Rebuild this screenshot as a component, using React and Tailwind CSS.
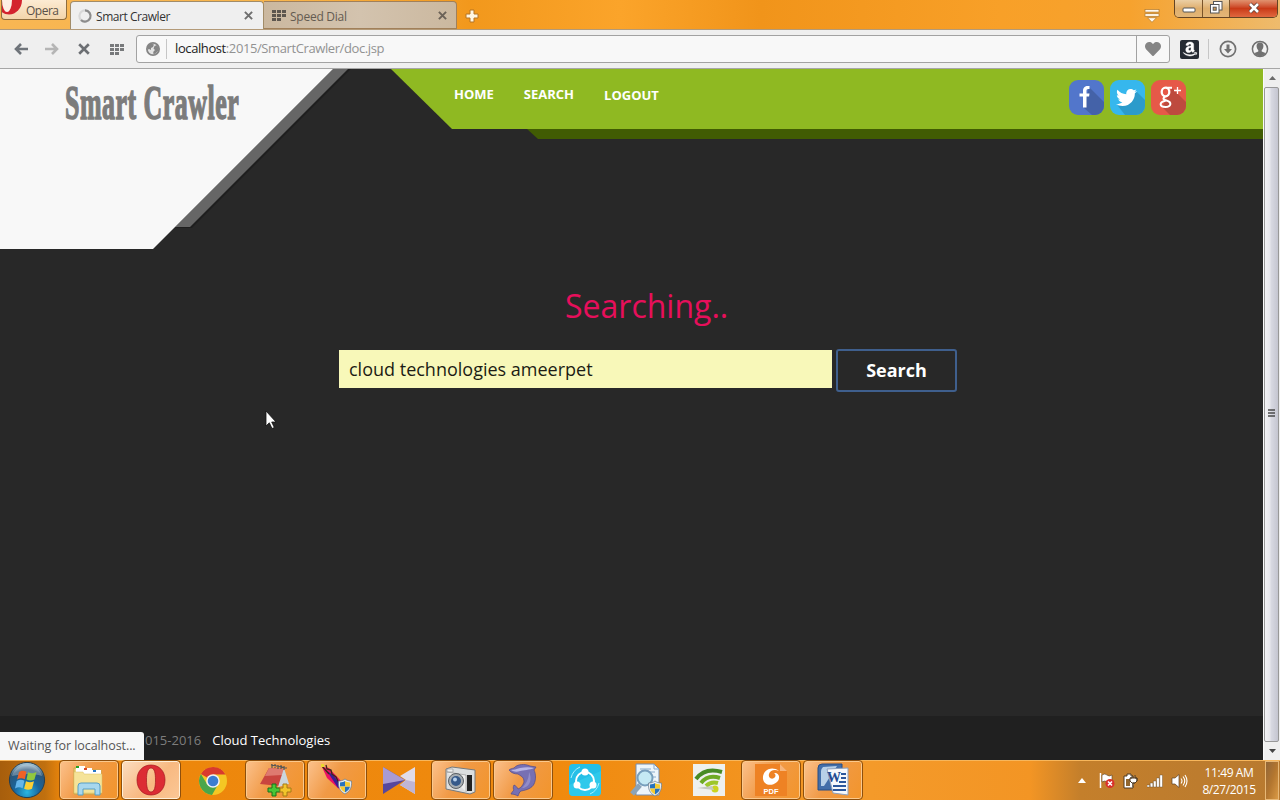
import React from "react";
import { FaHeart, FaTwitter, FaAmazon } from "react-icons/fa";

const UI = "font-['Open_Sans','Noto_Sans',sans-serif]";

function Dots({ className }) {
  return (
    <svg className={className} width="14" height="11" viewBox="0 0 14 11" fill="currentColor">
      {[0, 4, 8].map((y) =>
        [0, 5, 10].map((x) =>
          x === 10 && y === 8 ? null : <rect key={x + "-" + y} x={x} y={y} width="4" height="3" />
        )
      )}
    </svg>
  );
}

function Cross({ className, size }) {
  return (
    <svg className={className} width={size} height={size} viewBox="0 0 10 10" fill="none" stroke="currentColor" strokeWidth="2.2">
      <path d="M1 1l8 8M9 1l-8 8" />
    </svg>
  );
}

function TabBar() {
  return (
    <div className="flex h-[29px] shrink-0 items-start bg-[linear-gradient(90deg,#f8b653_0,#f9b64c_280px,#f2981c_470px,#fba42a_620px,#f1941a_760px,#f8a028_1000px,#f6a22e_1130px,#eebb6d_1280px)]">
      <div className="ml-[1px] mr-[3px] flex h-5 w-[66px] items-start overflow-hidden rounded-b-[4px] border border-t-0 border-[#8f6d3d] bg-gradient-to-b from-[#fcebd3] to-[#f3d5aa]">
        <svg width="21" height="16" viewBox="0 0 21 16" className="shrink-0">
          <ellipse cx="7" cy="0" rx="13" ry="14.5" fill="#d3232d" />
          <ellipse cx="5" cy="0" rx="5" ry="12" fill="#fdf0e4" />
        </svg>
        <span className="ml-[3px] mt-[3px] text-[12px] leading-[16px] tracking-[-0.5px] text-[#5a5148]">Opera</span>
      </div>
      <div className="z-10 mt-[1px] flex h-[28px] w-[194px] items-center rounded-t-[4px] border border-b-0 border-[#a28c68] bg-[#efefef] pl-[6px] pr-[10px]">
        <svg width="16" height="16" viewBox="0 0 16 16" fill="none" strokeWidth="2.2">
          <circle cx="8" cy="8" r="5.6" stroke="#d8d8d8" />
          <path d="M8 2.4A5.6 5.6 0 1 1 4 12" stroke="#8c8c8c" />
        </svg>
        <span className="ml-[3px] mt-[2px] flex-1 whitespace-nowrap text-[12px] tracking-[-0.45px] text-[#333]">Smart Crawler</span>
        <Cross size="9" className="text-[#6e6e6e]" />
      </div>
      <div className="mt-[1px] flex h-[28px] w-[193px] items-center rounded-tr-[4px] border border-l-0 border-[#a1805a] bg-gradient-to-r from-[#cbb89f] via-[#d3c3ae] to-[#cbb89f] pl-[8px] pr-[9px]">
        <Dots className="mt-[1px] text-[#5d564e]" />
        <span className="ml-[4px] mt-[3px] flex-1 whitespace-nowrap text-[12px] tracking-[-0.25px] text-[#645b51]">Speed Dial</span>
        <Cross size="9" className="mt-[1px] text-[#6c6257]" />
      </div>
      <svg width="14" height="14" viewBox="0 0 14 14" className="ml-[8px] mt-[9px]">
        <path d="M5 1h4v4h4v4H9v4H5V9H1V5h4z" fill="#fff6e3" stroke="#b57524" />
      </svg>
      <div className="flex-1" />
      <svg width="16" height="14" viewBox="0 0 16 14" className="mr-[14px] mt-[9px]" fill="#fff8ec" stroke="#b0782c" strokeWidth=".7">
        <rect x="1" y=".5" width="14" height="2.600" />
        <rect x="1" y="4.700" width="14" height="2.600" />
        <path d="M3.500 8.700h9L8 13.300z" />
      </svg>
      <div className="mr-[2px] flex h-[18px] w-[104px] overflow-hidden rounded-b-[5px] border border-t-0 border-[#654423]">
        <div className="flex w-[28px] items-center justify-center border-r border-[#7a542a] bg-gradient-to-b from-[#ebcfa5] via-[#dfae6c] to-[#e3b678]">
          <svg width="14" height="6" viewBox="0 0 14 6" className="mt-[2px]"><rect x="1" y="1" width="12" height="4" rx="1" fill="#fff" stroke="#555" /></svg>
        </div>
        <div className="flex w-[27px] items-center justify-center border-r border-[#7a542a] bg-gradient-to-b from-[#ebcfa5] via-[#dfae6c] to-[#e3b678]">
          <svg width="13" height="13" viewBox="0 0 13 13" className="mb-[2px]" fill="#fff" stroke="#555">
            <rect x="3.500" y=".5" width="8.500" height="8.500" />
            <rect x=".5" y="3.500" width="8.500" height="8.500" />
            <rect x="3.200" y="6.200" width="3" height="3" fill="#d19a52" />
          </svg>
        </div>
        <div className="flex flex-1 items-center justify-center bg-gradient-to-b from-[#e0926f] via-[#c93a17] to-[#e0673e]">
          <svg width="14" height="12" viewBox="0 0 14 12" className="mb-[1px]"><path d="M3 2l8 8M11 2l-8 8" stroke="#5b3a32" strokeWidth="4" /><path d="M3 2l8 8M11 2l-8 8" stroke="#fff" strokeWidth="2.600" /></svg>
        </div>
      </div>
    </div>
  );
}

function Toolbar() {
  return (
    <div className="flex h-[40px] shrink-0 items-center border-b border-t border-b-[#a6a6a6] border-t-[#b39a78] bg-[#efefef]">
      <svg width="14" height="12" viewBox="0 0 14 12" className="ml-[14px]" fill="none" stroke="#6f747a" strokeWidth="2.600"><path d="M2 6h12M7 1L2 6l5 5" /></svg>
      <svg width="14" height="12" viewBox="0 0 14 12" className="ml-[17px]" fill="none" stroke="#b5b5b5" strokeWidth="2.600"><path d="M12 6H0M7 1l5 5-5 5" /></svg>
      <Cross size="12" className="ml-[19px] text-[#6c6f73]" />
      <Dots className="ml-[20px] text-[#77797b]" />
      <div className="ml-[12px] flex h-[28px] w-[1034px] items-center rounded-[3px] border border-[#a2a2a2] bg-[#f8f8f8]">
        <svg width="14" height="14" viewBox="0 0 14 14" className="ml-[9px]">
          <circle cx="7" cy="7" r="6.100" fill="#e4e4e4" stroke="#858585" strokeWidth="1.800" />
          <path d="M2 3.500l3-2 3 1-1 2.500-2 1v2l-2-1-1.500 1z" fill="#858585" />
          <path d="M8.500 4l2.500-1 1.800 3.500L12 9l-3 3-2-.5.500-2 1.500-1.500-1.500-1.500z" fill="#858585" />
        </svg>
        <div className="ml-[6px] h-[20px] w-px bg-[#c6c6c6]" />
        <span className="ml-[8px] flex-1 whitespace-nowrap text-[13px] tracking-[-0.4px] text-[#929292]">
          <span className="text-[#222]">localhost</span>:2015/SmartCrawler/doc.jsp
        </span>
        <div className="flex h-full w-[33px] items-center justify-center border-l border-[#a2a2a2]">
          <FaHeart size={16} color="#858585" />
        </div>
      </div>
      <div className="ml-[10px] flex h-[19px] w-[19px] items-center justify-center rounded-[2px] bg-[#252b33]">
        <FaAmazon size={16} color="#fff" stroke="#fff" strokeWidth="14" />
      </div>
      <div className="ml-[9px] h-[20px] w-px bg-[#c6c6c6]" />
      <svg width="18" height="18" viewBox="0 0 18 18" className="ml-[10px]">
        <circle cx="9" cy="9" r="7.600" fill="none" stroke="#717171" strokeWidth="1.700" />
        <path d="M7.500 4.500h3v4.500H13l-4 4.500L5 9h2.500z" fill="#717171" />
      </svg>
      <svg width="18" height="18" viewBox="0 0 18 18" className="ml-[14px]">
        <circle cx="9" cy="9" r="7.600" fill="#f3f3f3" stroke="#717171" strokeWidth="1.500" />
        <path d="M9 2.500c-2.800 0-3.600 1.800-3.400 4 .2 2 .9 3 1.700 3.700v1.300l-3.800 1.600C5 15.500 7 16.300 9 16.300s4-.8 5.500-3.200l-3.800-1.600v-1.300c.8-.7 1.500-1.700 1.700-3.700.2-2.200-.6-4-3.400-4z" fill="#717171" />
      </svg>
    </div>
  );
}

function Social() {
  return (
    <div className="flex gap-[6px]">
      <div className="flex h-[35px] w-[35px] overflow-hidden rounded-[9px] bg-[#5276cb]">
        <svg width="35" height="35" viewBox="0 0 35 35">
          <path d="M20 7l15 15v13H23l-8-7z" fill="#4462a8" />
          <path d="M14 27.500V16.500h-3.500v-3H14V11c0-3.500 2-5 4.700-5h1.800v3h-1.300c-1.300 0-1.700.7-1.700 2v2.500h3l-.4 3h-2.600v11z" fill="#fff" />
        </svg>
      </div>
      <div className="flex h-[35px] w-[35px] overflow-hidden rounded-[9px] bg-[#36b7ed]">
        <svg width="35" height="35" viewBox="0 0 35 35">
          <path d="M27 12l8 8v15H15l-7-9z" fill="#2c9bcb" />
          <FaTwitter x={6} y={7} size={21} color="#fff" />
        </svg>
      </div>
      <div className="flex h-[35px] w-[35px] overflow-hidden rounded-[9px] bg-[#e65948]">
        <svg width="35" height="35" viewBox="0 0 35 35">
          <path d="M21 8l14 14v13H19l-8-8z" fill="#be4a3e" />
          <g fill="none" stroke="#fff">
            <ellipse cx="14.500" cy="12" rx="3.800" ry="4.300" strokeWidth="2.300" />
            <path d="M15 7.700h6M14 16.500c-3 2.500-1 3.300 1.500 4 6 1.700 4.500 6.500-1 6.500-6.500 0-6.500-5 0-6.300" strokeWidth="2" />
            <path d="M26.500 7v7M23 10.500h7" strokeWidth="1.300" />
          </g>
        </svg>
      </div>
    </div>
  );
}

function Page() {
  return (
    <div className="relative flex h-[691px] shrink-0 bg-[#282828]">
      <div className="flex w-[1263px] flex-col">
        <header className="flex h-[180px] items-start">
          <div className="relative h-[180px] w-[391px] shrink-0">
            <div className="absolute left-[176px] top-0 h-[162px] w-[175px] bg-[#1e1e1e] [clip-path:polygon(161px_0,175px_0,16px_159px,0_159px)]" />
            <div className="absolute left-[170px] top-0 h-[158px] w-[178px] bg-[#666] [clip-path:polygon(163px_0,178px_0,20px_158px,5px_158px)]" />
            <div className="relative flex h-[180px] w-[333px] items-start bg-[#f8f8f8] pl-[65px] pt-[4px] [clip-path:polygon(0_0,100%_0,153px_100%,0_100%)]">
              <span className="inline-block origin-left scale-x-[0.528] whitespace-nowrap font-['Liberation_Serif',serif] text-[49px] font-bold leading-[60px] tracking-[1px] text-[#7c7c7c] [-webkit-text-stroke:1.6px_#7c7c7c]">Smart Crawler</span>
            </div>
          </div>
          <div className="flex flex-1 flex-col">
            <nav className="flex h-[60px] items-start justify-between bg-[#8fb922] pl-[63px] pr-[77px] [clip-path:polygon(0_0,100%_0,100%_100%,61px_100%)]">
              <div className="flex gap-[30px] pt-[15px] text-[13px] font-bold leading-[20px] text-white">
                <a>HOME</a>
                <a>SEARCH</a>
                <a className="pt-px">LOGOUT</a>
              </div>
              <div className="pt-[11px]"><Social /></div>
            </nav>
            <div className="ml-[136px] h-[10px] bg-[#415c03] [clip-path:polygon(0_0,100%_0,100%_100%,11px_100%)]" />
          </div>
        </header>
        <main className="flex flex-1 flex-col">
          <h1 className="ml-[565px] mt-[35px] whitespace-nowrap text-[32px] leading-[44px] text-[#e60f5b]">Searching..</h1>
          <div className="ml-[339px] mt-[21px] flex">
            <div className="mt-[1px] flex h-[38px] w-[493px] items-center bg-[#f8f8b9] pl-[10px] text-[18px] text-[#1c1c14]"><span>cloud technologies ameerpet</span></div>
            <button className="ml-[4px] flex h-[43px] w-[121px] items-center justify-center rounded-[3px] border-2 border-[#3f5f8d] text-[18px] font-bold text-white">Search</button>
          </div>
        </main>
        <footer className="flex h-[44px] items-start bg-[#202020] pl-[145px] pt-[14px] text-[13px] leading-[20px]">
          <span className="text-[#7d7d7d]">015-2016</span>
          <span className="ml-[11px] text-white">Cloud Technologies</span>
        </footer>
      </div>
      <div className="flex w-[17px] flex-col border-l border-[#fafafa] bg-[#efefef]">
        <div className="flex h-[18px] items-center justify-center"><svg width="7" height="4"><path d="M0 4l3.500-4L7 4z" fill="#6b6b6b" /></svg></div>
        <div className="mr-[1px] flex h-[655px] items-center justify-center rounded-[2px] border border-[#989898] bg-[linear-gradient(90deg,#f3f3f5_0,#e8e8ed_35%,#d7d8e1_50%,#c4c5d0_100%)]">
          <svg width="7" height="8" className="mt-[-4px]"><path d="M0 1h7M0 4h7M0 7h7" stroke="#4a4a4a" strokeWidth="1.400" /></svg>
        </div>
        <div className="flex flex-1 items-center justify-center"><svg width="7" height="4"><path d="M0 0l3.500 4L7 0z" fill="#444" /></svg></div>
      </div>
      <div className="absolute bottom-0 left-0 flex h-[28px] w-[144px] items-center rounded-tr-[3px] bg-[#f7f7f7] pl-[8px] text-[12.500px] tracking-[-0.07px] text-[#555]"><span className="whitespace-nowrap">Waiting for localhost...</span></div>
      <svg className="absolute left-[265px] top-[341px]" width="12" height="20" viewBox="0 0 12 20"><path d="M1 1v15l3.300-3.200L7 18.500l2.300-1-2.600-5.500H11z" fill="#fff" stroke="#111" strokeWidth=".8" /></svg>
    </div>
  );
}

function Slot({ kind, children }) {
  const look =
    kind === "active"
      ? "border-[#fff0d9] bg-[linear-gradient(135deg,#fbdcbf,#f8b981_55%,#fbc795)] outline-[#8e4f0c]"
      : kind === "open"
      ? "border-[#fbc98d] bg-[linear-gradient(120deg,#fbc08a,#f19a46_45%,#f2952c)] outline-[#8e4f0c]"
      : "border-transparent outline-transparent";
  return (
    <div className={"flex h-[38px] w-[58px] shrink-0 items-center justify-center rounded-[3px] border outline-1 " + look}>
      <svg width="36" height="34" viewBox="0 0 36 34">{children}</svg>
    </div>
  );
}

function Shield({ x, y }) {
  return (
    <g transform={`translate(${x} ${y})`}>
      <path d="M7 0c2 1.500 4 2 6.500 2 .5 6-1 10-6.500 13C1.500 12 0 8 .5 2 3 2 5 1.500 7 0z" fill="#e8edf0" stroke="#66788a" strokeWidth=".7" />
      <path d="M7 2v5.500H2V3.500C4 3.400 5.500 3 7 2zM7 7.500h5c-.5 3-2.500 4.500-5 6z" fill="#2772bd" />
      <path d="M7 2c1.500 1 3 1.400 5 1.500v4H7zM2 7.500h5v6c-2.500-1.500-4.500-3-5-6z" fill="#f5cb33" />
    </g>
  );
}

function Taskbar() {
  return (
    <div className="flex h-[40px] shrink-0 items-start border-t border-[#f7b65b] bg-[linear-gradient(90deg,#a75e0c_0,#c0700f_45px,#ec860b_62px,#f08a0e_560px,#f49a2a_870px,#f39524_1030px,#c47f2b_1080px,#b87a30_1280px)]">
      <div className="flex w-[60px] pl-[8px] pt-px">
        <svg width="38" height="38" viewBox="0 0 38 38">
          <defs>
            <radialGradient id="orb" cx=".5" cy=".85" r=".8"><stop offset="0" stopColor="#29b6e4" /><stop offset=".45" stopColor="#18659c" /><stop offset=".8" stopColor="#2c5577" /><stop offset="1" stopColor="#9bbdcf" /></radialGradient>
          </defs>
          <circle cx="19" cy="18" r="17.600" fill="url(#orb)" stroke="#253e50" />
          <path d="M4 14a15.500 15.500 0 0 1 30 0c-10-3-20-2-30 0z" fill="#fff" opacity=".28" />
          <path d="M11 10c3-2 5-1.500 7.500-.3l-1.700 7.500c-3-1.300-5-1.200-7.700.3z" fill="#ef6226" />
          <path d="M20 10.200c3 1.500 5 1.500 8.500-.3l-2 7.500c-3 1.500-5 1.300-8 0z" fill="#91c83e" />
          <path d="M8.700 19c3-1.500 5-1.500 7.700-.2l-1.800 7.400c-2.600-1.400-4.800-1.300-7.600.2z" fill="#65b5ea" />
          <path d="M18 19.200c3 1.400 5 1.300 8 0l-2 7.500c-3 1.500-5 1.300-7.900 0z" fill="#fbcf35" />
        </svg>
      </div>
      <div className="flex gap-[4px]">
        <Slot kind="open">
          <path d="M3 5h9l1 2h17v24H3z" fill="#f1da83" stroke="#c6a94d" />
          <path d="M5 3h9v6H5zM12 5h9v6h-9zM20 7h10v5H20z" fill="#fff" />
          <path d="M5 3h3v2H5z" fill="#25a025" /><path d="M13 5h3v2h-3z" fill="#d94926" /><path d="M22 7h3v2h-3z" fill="#2678c9" />
          <path d="M3 9h9l1 2h18v19H3z" fill="#f5e398" stroke="#d8bd62" strokeWidth=".5" />
          <path d="M7 32V23q0-3 3-3h16q3 0 3 3v9h-5v-6H12v6z" fill="#a7d7ee" stroke="#579fc5" />
        </Slot>
        <Slot kind="active">
          <path fillRule="evenodd" d="M18 2c8 0 14 6 14 15s-6 15-14 15S4 26 4 17 10 2 18 2zm0 3c-3.500 0-4.500 5-4.500 12S14.500 29 18 29s4.500-5 4.500-12S21.500 5 18 5z" fill="#dc2c34" stroke="#a4161e" strokeWidth=".7" />
        </Slot>
        <Slot>
          <circle cx="18" cy="18" r="14" fill="#f4c724" />
          <path d="M18 18L5.900 11A14 14 0 0 1 30.500 11.500H18z" fill="#d93a2e" />
          <path d="M5.900 11A14 14 0 0 0 17 32l6-10.500L12 21z" fill="#4aa64a" />
          <circle cx="18" cy="18" r="6.800" fill="#f2f2f2" /><circle cx="18" cy="18" r="5.300" fill="#3b7dd0" />
        </Slot>
        <Slot kind="open">
          <path d="M12 5l15 1-5 17-19-2z" fill="#c9453f" /><path d="M12 5l15 1-2 6-17 1z" fill="#de7a70" />
          <path d="M27 5l5 16-11 3z" fill="#cbd5db" /><path d="M14 2l16 3M15 1v4M18 1v4M21 2v4M24 2v4M27 3v4" stroke="#555" strokeWidth="1.200" />
          <path d="M15 21h4v4h4v4h-4v4h-4v-4h-4v-4h4z" fill="#48c636" stroke="#19701a" /><path d="M26 21h4v4h4v4h-4v4h-4v-4h-3v-4h3z" fill="#f2c52b" stroke="#a47b16" />
        </Slot>
        <Slot kind="open">
          <path d="M3 4l7 1 13 14-3 7-12-11z" fill="#ec1264" /><path d="M8 8l6 4 9 11-4 2z" fill="#3c1d94" /><path d="M3 3l7 8M7 2l1 4 4 1 1 4 4 3 3 6" stroke="#3e2818" fill="none" strokeWidth="1.300" /><path d="M2 1h3v3H2z" fill="#ead82d" />
          <Shield x={19} y={16} />
        </Slot>
        <Slot>
          <path d="M2 4l22 13L2 31z" fill="#56479c" /><path d="M2 4l22 13L2 21z" fill="#a99bd2" /><path d="M34 4L19 13l6 4-6 5 15 9z" fill="#e0dcea" /><path d="M34 19v12l-15-9 6-5z" fill="#bfb5d5" />
        </Slot>
        <Slot kind="open">
          <path d="M3 6l6-2 23 3v22l-5 2-24-5z" fill="#dcdedf" stroke="#767a7d" /><path d="M4 9l19 3v17M4 6h6v3H4z" fill="#eee" stroke="#9a9a9a" strokeWidth=".7" /><path d="M24 12h5v16h-5z" fill="#222" />
          <circle cx="13" cy="18" r="7.500" fill="#a7adb2" stroke="#5b6065" /><circle cx="13" cy="18" r="5" fill="#375a8a" /><circle cx="12" cy="16.500" r="2" fill="#b7d0ec" />
        </Slot>
        <Slot kind="open">
          <path d="M4 7c1-1 3-1.500 5-2 3-4 11-4.500 16-2l6 1-2 3c2 4 2 10 0 14-2 4-7 6-13 7-2 1-2 3-3 5-2-1-4-2-7-2 1-2 2-3 3-4-1-1-1-3 0-5 2 1 3 2 4 4 3-1 5-4 6-7 0-3-1-5-3-6-1-1-2-1-3-2-3 0-7-1-9-4z" fill="#7770b3" stroke="#50498b" strokeWidth=".7" />
          <path d="M6 7c3 0 5-1 9-2 5-1 10-1 14 0-4 2-11 2-14 3-3 1-6 1-9-1z" fill="#b9b6e6" />
          <path d="M24 9c2 4 2 9 0 12-1 2-4 4-7 4 4-4 7-9 7-16z" fill="#928cc8" />
        </Slot>
        <Slot>
          <rect x="2" y="1" width="32" height="32" rx="4" fill="#24bfe7" /><path d="M2 22L34 8v21q0 4-4 4H6q-4 0-4-4z" fill="#35d0ee" opacity=".6" />
          <circle cx="18" cy="18" r="9" fill="none" stroke="#fff" strokeWidth="2" /><g fill="#fff"><circle cx="18" cy="9" r="3.500" /><circle cx="10" cy="22" r="3.500" /><circle cx="26" cy="22" r="3.500" /></g><path d="M4 15Q6 7 13 4M32 20Q30 28 23 31" stroke="#a9f0ff" fill="none" />
        </Slot>
        <Slot>
          <path d="M7 1h18l5 5v26H7z" fill="#edf5fb" stroke="#758db0" /><path d="M25 1v5h5M11 6h11M11 9h15M22 14h5" fill="none" stroke="#87aacc" />
          <path d="M11 22l-8 9" stroke="#8ba3b7" strokeWidth="5" /><circle cx="16" cy="15" r="7.500" fill="#c4e9f4" stroke="#789fbd" strokeWidth="2" /><Shield x={19} y={18} />
        </Slot>
        <Slot>
          <rect x="2" y="1" width="32" height="32" fill="#eef0ee" /><g fill="none" strokeWidth="4"><path d="M5 16Q14 4 31 9" stroke="#478b25" /><path d="M10 20Q17 11 29 15" stroke="#6daa24" /><path d="M15 23Q20 18 27 20" stroke="#9dc62b" /></g><circle cx="24" cy="26" r="3.500" fill="#cbd420" /><path d="M6 25l15-2 2 4z" fill="#c4c8c1" />
        </Slot>
        <Slot kind="open">
          <path d="M2 1h25l7 7v25H2z" fill="#ee8224" /><path d="M27 1v7h7z" fill="#f7b57a" /><path d="M26 8c-8-6-17 0-16 8 1 6 8 8 14 3 4-4 2-10-3-9 2 1 2 4 0 5-3 2-6-1-5-4 1-4 6-5 10-3z" fill="#fff" />
          <text x="18" y="31" fill="#fff" fontSize="7.500" fontWeight="700" textAnchor="middle" fontFamily="Liberation Sans, sans-serif">PDF</text>
        </Slot>
        <Slot kind="open">
          <path d="M7 1h20v26H3V5q0-4 4-4z" fill="#436ea9" stroke="#284c83" /><path d="M8 4l14-1-13 20H6V8q0-2 2-4z" fill="#b8d0e8" />
          <path d="M12 6l21-1v27l-15-2z" fill="#f6f8fc" stroke="#8da0bd" /><path d="M26 11h5M26 15h5M24 19h7M18 23h13M18 27h13" stroke="#2c579c" strokeWidth="2" />
          <text x="12" y="19" fill="#224a91" fontSize="14" fontWeight="700" fontFamily="Liberation Serif, serif">W</text>
        </Slot>
      </div>
      <div className="flex-1" />
      <div className="flex h-full items-center">
        <svg width="8" height="5"><path d="M0 5l4-5 4 5z" fill="#fff" /></svg>
        <svg width="17" height="16" viewBox="0 0 17 16" className="ml-[13px]"><path d="M1.500 0v15" stroke="#fff" strokeWidth="1.500" /><path d="M3 2q3-2 5 0t5 0v7q-3 2-5 0t-5 0z" fill="#fff" stroke="#594126" strokeWidth=".6" /><circle cx="11" cy="10.500" r="4.500" fill="#d9302b" /><path d="M9 8.500l4 4M13 8.500l-4 4" stroke="#fff" strokeWidth="1.500" /></svg>
        <svg width="17" height="16" viewBox="0 0 17 16" className="ml-[6px]"><path d="M2 3h3V1h4v2h2v12H2z" fill="#fff" stroke="#4e3a22" /><path d="M4 6h4v7H4z" fill="#90662f" /><path d="M8 5h2V2M13 2v3h2v3l-2 2h-2v4M8 5h7v3l-2 2h-3L8 8z" fill="#fff" stroke="#4e3a22" /></svg>
        <svg width="16" height="14" viewBox="0 0 16 14" className="ml-[8px]" fill="#fff" stroke="#594126" strokeWidth=".4"><path d="M0 11h2.700v2H0zM3.200 9h2.700v4H3.200zM6.400 7h2.700v6H6.400zM9.600 4h2.700v9H9.600zM12.800 1h2.700v12h-2.700z" /></svg>
        <svg width="17" height="16" viewBox="0 0 17 16" className="ml-[8px]"><path d="M1 5h3l4-3.500v13L4 11H1z" fill="#fff" stroke="#594126" strokeWidth=".7" /><path d="M10 5.500q2 2.500 0 5M12 3.500q3.500 4.500 0 9M14 2q4 6 0 12" fill="none" stroke="#fff" strokeWidth="1.100" /></svg>
        <div className="ml-[12px] w-[58px] whitespace-nowrap text-center text-[12px] leading-[17px] tracking-[-0.4px] text-white"><div>11:49 AM</div><div>8/27/2015</div></div>
        <div className="ml-[7px] h-[39px] w-[14px] border border-[#e8b876] bg-gradient-to-br from-[#916638] via-[#b3762f] to-[#da9a45]" />
        <div className="w-px" />
      </div>
    </div>
  );
}

export default function App() {
  return (
    <div className={"flex h-[800px] w-[1280px] flex-col overflow-hidden " + UI}>
      <TabBar />
      <Toolbar />
      <Page />
      <Taskbar />
    </div>
  );
}
